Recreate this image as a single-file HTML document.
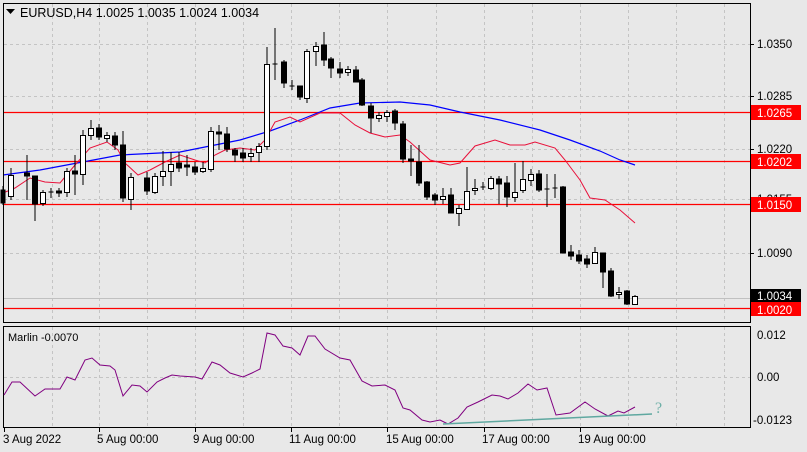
<!DOCTYPE html>
<html><head><meta charset="utf-8"><style>
html,body{margin:0;padding:0;background:#e8e8e8;}
svg{display:block;font-family:"Liberation Sans",sans-serif;}
</style></head><body>
<svg width="807" height="452" viewBox="0 0 807 452" xmlns="http://www.w3.org/2000/svg">
<rect x="0" y="0" width="807" height="452" fill="#e8e8e8"/>
<g stroke="#c4c4c4" stroke-dasharray="3,3" stroke-width="1">
<line x1="52.5" y1="4" x2="52.5" y2="322"/><line x1="99.5" y1="4" x2="99.5" y2="322"/><line x1="147.5" y1="4" x2="147.5" y2="322"/><line x1="195.5" y1="4" x2="195.5" y2="322"/><line x1="243.5" y1="4" x2="243.5" y2="322"/><line x1="291.5" y1="4" x2="291.5" y2="322"/><line x1="339.5" y1="4" x2="339.5" y2="322"/><line x1="387.5" y1="4" x2="387.5" y2="322"/><line x1="436.5" y1="4" x2="436.5" y2="322"/><line x1="484.5" y1="4" x2="484.5" y2="322"/><line x1="532.5" y1="4" x2="532.5" y2="322"/><line x1="580.5" y1="4" x2="580.5" y2="322"/><line x1="628.5" y1="4" x2="628.5" y2="322"/><line x1="676.5" y1="4" x2="676.5" y2="322"/><line x1="724.5" y1="4" x2="724.5" y2="322"/>
<line x1="4" y1="44.5" x2="750" y2="44.5"/><line x1="4" y1="96.5" x2="750" y2="96.5"/><line x1="4" y1="149.5" x2="750" y2="149.5"/><line x1="4" y1="199.5" x2="750" y2="199.5"/><line x1="4" y1="253.5" x2="750" y2="253.5"/>
<line x1="52.5" y1="327" x2="52.5" y2="427"/><line x1="99.5" y1="327" x2="99.5" y2="427"/><line x1="147.5" y1="327" x2="147.5" y2="427"/><line x1="195.5" y1="327" x2="195.5" y2="427"/><line x1="243.5" y1="327" x2="243.5" y2="427"/><line x1="291.5" y1="327" x2="291.5" y2="427"/><line x1="339.5" y1="327" x2="339.5" y2="427"/><line x1="387.5" y1="327" x2="387.5" y2="427"/><line x1="436.5" y1="327" x2="436.5" y2="427"/><line x1="484.5" y1="327" x2="484.5" y2="427"/><line x1="532.5" y1="327" x2="532.5" y2="427"/><line x1="580.5" y1="327" x2="580.5" y2="427"/><line x1="628.5" y1="327" x2="628.5" y2="427"/><line x1="676.5" y1="327" x2="676.5" y2="427"/><line x1="724.5" y1="327" x2="724.5" y2="427"/>
<line x1="4" y1="377.5" x2="750" y2="377.5"/>
</g>
<line x1="4" y1="298.5" x2="750" y2="298.5" stroke="#c0c0c0"/>
<g stroke="#ff0000" stroke-width="1.3">
<line x1="4" y1="112.5" x2="750" y2="112.5"/><line x1="4" y1="161.5" x2="750" y2="161.5"/><line x1="4" y1="204.5" x2="750" y2="204.5"/><line x1="4" y1="308.5" x2="750" y2="308.5"/>
</g>
<polyline fill="none" stroke="#0000ff" stroke-width="1.2" points="3,175 40,170 120,155 180,152 240,140 270,131 300,120 330,108 360,103 400,102 430,105 460,112 500,120 540,130 570,140 600,151 620,160 635,165"/>
<polyline fill="none" stroke="#e8103a" stroke-width="1" points="3,193 15,188 30,178 45,182 60,183 75,165 90,148 107,142 118,150 125,163 138,175 150,170 165,162 180,155 195,160 205,163 215,155 225,150 240,148 255,150 265,140 275,122 290,117 300,122 320,113 340,113 355,125 370,133 385,137 400,135 410,142 430,160 450,165 460,163 475,146 495,140 510,145 525,145 535,142 555,148 565,160 580,180 590,198 605,200 620,210 635,223"/>
<g stroke="#000" stroke-width="1">
<line x1="3" y1="186" x2="3" y2="205"/><rect x="1" y="190" width="4" height="13" fill="#000"/>
<line x1="11" y1="168" x2="11" y2="200"/><rect x="8.5" y="175.5" width="5" height="21" fill="#fff"/>
<line x1="27" y1="155" x2="27" y2="200"/><rect x="24.5" y="173" width="5" height="3" fill="#000"/>
<line x1="35" y1="176" x2="35" y2="221"/><rect x="32.5" y="176" width="5" height="28" fill="#000"/>
<line x1="43" y1="190" x2="43" y2="206"/><rect x="40.5" y="192.5" width="5" height="11" fill="#fff"/>
<line x1="51" y1="188" x2="51" y2="198"/><line x1="48.5" y1="192" x2="53.5" y2="192"/>
<line x1="59" y1="188" x2="59" y2="197"/><rect x="56.5" y="191" width="5" height="2" fill="#000"/>
<line x1="67" y1="168" x2="67" y2="197"/><rect x="64.5" y="171.5" width="5" height="21" fill="#fff"/>
<line x1="75" y1="155" x2="75" y2="195"/><rect x="72.5" y="171" width="5" height="3" fill="#000"/>
<line x1="83" y1="130" x2="83" y2="185"/><rect x="80.5" y="135.5" width="5" height="39" fill="#fff"/>
<line x1="91" y1="120" x2="91" y2="140"/><rect x="88.5" y="128.5" width="5" height="7" fill="#fff"/>
<line x1="99" y1="124" x2="99" y2="140"/><rect x="96.5" y="128" width="5" height="9" fill="#000"/>
<line x1="107" y1="132" x2="107" y2="142"/><rect x="104.5" y="135.5" width="5" height="3" fill="#fff"/>
<line x1="115" y1="132" x2="115" y2="150"/><rect x="112.5" y="136" width="5" height="9" fill="#000"/>
<line x1="123" y1="131" x2="123" y2="202"/><rect x="120.5" y="145" width="5" height="53" fill="#000"/>
<line x1="131" y1="173" x2="131" y2="210"/><rect x="128.5" y="177.5" width="5" height="22" fill="#fff"/>
<line x1="147" y1="172" x2="147" y2="195"/><rect x="144.5" y="178" width="5" height="13" fill="#000"/>
<line x1="155" y1="173" x2="155" y2="194"/><rect x="152.5" y="176.5" width="5" height="16" fill="#fff"/>
<line x1="163" y1="151" x2="163" y2="186"/><rect x="160.5" y="171.5" width="5" height="5" fill="#fff"/>
<line x1="171" y1="152" x2="171" y2="186"/><rect x="168.5" y="164.5" width="5" height="7" fill="#fff"/>
<line x1="179" y1="152" x2="179" y2="172"/><rect x="176.5" y="163" width="5" height="5" fill="#000"/>
<line x1="187" y1="155" x2="187" y2="176"/><rect x="184.5" y="165" width="5" height="2" fill="#000"/>
<line x1="195" y1="162" x2="195" y2="175"/><rect x="192.5" y="167" width="5" height="5" fill="#000"/>
<line x1="203" y1="162" x2="203" y2="173"/><rect x="200.5" y="168.5" width="5" height="3" fill="#fff"/>
<line x1="211" y1="127" x2="211" y2="172"/><rect x="208.5" y="131.5" width="5" height="38" fill="#fff"/>
<line x1="219" y1="125" x2="219" y2="150"/><rect x="216.5" y="132" width="5" height="2" fill="#000"/>
<line x1="227" y1="127" x2="227" y2="152"/><rect x="224.5" y="134" width="5" height="15" fill="#000"/>
<line x1="235" y1="148" x2="235" y2="162"/><rect x="232.5" y="150" width="5" height="5" fill="#000"/>
<line x1="243" y1="148" x2="243" y2="162"/><rect x="240.5" y="153" width="5" height="5" fill="#000"/>
<line x1="251" y1="148" x2="251" y2="162"/><rect x="248.5" y="153.5" width="5" height="3" fill="#fff"/>
<line x1="259" y1="143" x2="259" y2="162"/><rect x="256.5" y="146.5" width="5" height="6" fill="#fff"/>
<line x1="267" y1="47" x2="267" y2="150"/><rect x="264.5" y="64.5" width="5" height="82" fill="#fff"/>
<line x1="275" y1="28" x2="275" y2="80"/><line x1="272.5" y1="64" x2="277.5" y2="64"/>
<line x1="284" y1="60" x2="284" y2="88"/><rect x="281.5" y="62" width="5" height="21" fill="#000"/>
<line x1="292" y1="80" x2="292" y2="90"/><line x1="289.5" y1="86" x2="294.5" y2="86"/>
<line x1="300" y1="86" x2="300" y2="100"/><rect x="297.5" y="86" width="5" height="11" fill="#000"/>
<line x1="307" y1="49" x2="307" y2="103"/><rect x="304.5" y="51.5" width="5" height="47" fill="#fff"/>
<line x1="316" y1="42" x2="316" y2="66"/><rect x="313.5" y="46.5" width="5" height="5" fill="#fff"/>
<line x1="324" y1="32" x2="324" y2="66"/><rect x="321.5" y="45" width="5" height="15" fill="#000"/>
<line x1="331" y1="57" x2="331" y2="78"/><rect x="328.5" y="59" width="5" height="9" fill="#000"/>
<line x1="340" y1="62" x2="340" y2="78"/><rect x="337.5" y="69" width="5" height="4" fill="#000"/>
<line x1="348" y1="66" x2="348" y2="76"/><rect x="345.5" y="69.5" width="5" height="3" fill="#fff"/>
<line x1="356" y1="66" x2="356" y2="82"/><rect x="353.5" y="70" width="5" height="12" fill="#000"/>
<line x1="362" y1="78" x2="362" y2="106"/><rect x="359.5" y="80" width="5" height="25" fill="#000"/>
<line x1="371" y1="103" x2="371" y2="133"/><rect x="368.5" y="106" width="5" height="12" fill="#000"/>
<line x1="379" y1="112" x2="379" y2="122"/><rect x="376.5" y="115.5" width="5" height="3" fill="#fff"/>
<line x1="387" y1="110" x2="387" y2="122"/><rect x="384.5" y="112.5" width="5" height="4" fill="#fff"/>
<line x1="395" y1="109" x2="395" y2="130"/><rect x="392.5" y="111" width="5" height="12" fill="#000"/>
<line x1="403" y1="121" x2="403" y2="163"/><rect x="400.5" y="124" width="5" height="35" fill="#000"/>
<line x1="411" y1="145" x2="411" y2="176"/><rect x="408.5" y="159" width="5" height="2" fill="#000"/>
<line x1="419" y1="145" x2="419" y2="186"/><rect x="416.5" y="162" width="5" height="21" fill="#000"/>
<line x1="427" y1="181" x2="427" y2="200"/><rect x="424.5" y="182" width="5" height="15" fill="#000"/>
<line x1="435" y1="193" x2="435" y2="205"/><rect x="432.5" y="195" width="5" height="5" fill="#000"/>
<line x1="443" y1="188" x2="443" y2="204"/><rect x="440.5" y="196.5" width="5" height="3" fill="#fff"/>
<line x1="451" y1="188" x2="451" y2="213"/><rect x="448.5" y="195" width="5" height="18" fill="#000"/>
<line x1="459" y1="205" x2="459" y2="226"/><rect x="456.5" y="208.5" width="5" height="5" fill="#fff"/>
<line x1="467" y1="167" x2="467" y2="209"/><rect x="464.5" y="191.5" width="5" height="18" fill="#fff"/>
<line x1="475" y1="179" x2="475" y2="195"/><rect x="472.5" y="188.5" width="5" height="2" fill="#fff"/>
<line x1="483" y1="182" x2="483" y2="190"/><line x1="480.5" y1="187" x2="485.5" y2="187"/>
<line x1="491" y1="176" x2="491" y2="190"/><rect x="488.5" y="178.5" width="5" height="10" fill="#fff"/>
<line x1="499" y1="176" x2="499" y2="204"/><rect x="496.5" y="179" width="5" height="5" fill="#000"/>
<line x1="507" y1="176" x2="507" y2="207"/><rect x="504.5" y="183" width="5" height="14" fill="#000"/>
<line x1="515" y1="163" x2="515" y2="202"/><rect x="512.5" y="192.5" width="5" height="5" fill="#fff"/>
<line x1="523" y1="161" x2="523" y2="193"/><rect x="520.5" y="179.5" width="5" height="11" fill="#fff"/>
<line x1="531" y1="169" x2="531" y2="186"/><rect x="528.5" y="174.5" width="5" height="6" fill="#fff"/>
<line x1="539" y1="170" x2="539" y2="192"/><rect x="536.5" y="174" width="5" height="16" fill="#000"/>
<line x1="547" y1="174" x2="547" y2="207"/><line x1="544.5" y1="189" x2="549.5" y2="189"/>
<line x1="555" y1="174" x2="555" y2="198"/><line x1="552.5" y1="188" x2="557.5" y2="188"/>
<line x1="563" y1="186" x2="563" y2="253"/><rect x="560.5" y="187" width="5" height="66" fill="#000"/>
<line x1="571" y1="245" x2="571" y2="260"/><rect x="568.5" y="252" width="5" height="4" fill="#000"/>
<line x1="579" y1="250" x2="579" y2="264"/><rect x="576.5" y="255" width="5" height="6" fill="#000"/>
<line x1="587" y1="255" x2="587" y2="268"/><rect x="584.5" y="259" width="5" height="5" fill="#000"/>
<line x1="595" y1="247" x2="595" y2="264"/><rect x="592.5" y="252.5" width="5" height="11" fill="#fff"/>
<line x1="603" y1="253" x2="603" y2="288"/><rect x="600.5" y="253" width="5" height="19" fill="#000"/>
<line x1="611" y1="268" x2="611" y2="297"/><rect x="608.5" y="271" width="5" height="25" fill="#000"/>
<line x1="619" y1="287" x2="619" y2="299"/><rect x="616.5" y="292.5" width="5" height="2" fill="#fff"/>
<line x1="627" y1="290" x2="627" y2="305"/><rect x="624.5" y="291" width="5" height="13" fill="#000"/>
<line x1="635" y1="295" x2="635" y2="304"/><rect x="632.5" y="296.5" width="5" height="8" fill="#fff"/>
</g>
<rect x="3.5" y="3.5" width="747" height="319" fill="none" stroke="#000"/>
<rect x="3.5" y="326.5" width="747" height="101" fill="none" stroke="#000"/>
<polygon points="6,9 15,9 10.5,14" fill="#000"/>
<text x="20" y="17" font-size="12.5" fill="#000">EURUSD,H4  1.0025 1.0035 1.0024 1.0034</text>
<g font-size="11.5" fill="#000">
<text x="757" y="48">1.0350</text><text x="757" y="100">1.0285</text><text x="757" y="153">1.0220</text><text x="757" y="203">1.0155</text><text x="757" y="257">1.0090</text>
<text x="757" y="339">0.012</text><text x="757" y="381">0.00</text><text x="753" y="424">-0.0123</text>
</g>
<g stroke="#000"><line x1="750" y1="44.5" x2="754" y2="44.5"/><line x1="750" y1="96.5" x2="754" y2="96.5"/><line x1="750" y1="149.5" x2="754" y2="149.5"/><line x1="750" y1="253.5" x2="754" y2="253.5"/></g>
<rect x="751" y="105" width="50" height="15" fill="#ff0000"/><text x="757" y="117" font-size="11.5" fill="#fff">1.0265</text>
<rect x="751" y="154" width="50" height="15" fill="#ff0000"/><text x="757" y="166" font-size="11.5" fill="#fff">1.0202</text>
<rect x="751" y="197" width="50" height="15" fill="#ff0000"/><text x="757" y="209" font-size="11.5" fill="#fff">1.0150</text>
<rect x="751" y="289" width="50" height="14" fill="#000"/><text x="757" y="300" font-size="11.5" fill="#fff">1.0034</text>
<rect x="751" y="302" width="50" height="14" fill="#ff0000"/><text x="757" y="314" font-size="11.5" fill="#fff">1.0020</text>
<text x="8" y="341" font-size="11" fill="#000">Marlin -0.0070</text>
<polyline fill="none" stroke="#800080" stroke-width="1" points="4,395 12,382 20,382 35,396 45,389 60,389 67,377 75,380 85,360 92,358 100,365 110,366 115,370 123,396 132,385 140,386 147,392 157,382 165,378 172,375 180,376 195,377 202,379 212,362 220,365 230,373 243,377 252,373 260,369 267,333 275,335 283,346 292,348 300,355 308,336 315,336 325,349 340,358 350,360 362,381 372,386 385,385 395,390 403,408 410,410 422,420 430,422 440,420 448,424 458,418 467,407 478,402 492,395 500,396 508,399 518,393 528,384 537,390 547,388 556,415 570,413 585,402 595,409 608,416 618,411 624,413 635,407"/>
<line x1="443" y1="424" x2="652" y2="414" stroke="#5fa8a0" stroke-width="1.5"/>
<text x="655" y="413" font-size="16" fill="#6fb0a8" font-family="Liberation Serif,serif">?</text>
<g stroke="#000"><line x1="4.5" y1="428" x2="4.5" y2="432"/><line x1="99.5" y1="428" x2="99.5" y2="432"/><line x1="195.5" y1="428" x2="195.5" y2="432"/><line x1="291.5" y1="428" x2="291.5" y2="432"/><line x1="387.5" y1="428" x2="387.5" y2="432"/><line x1="484.5" y1="428" x2="484.5" y2="432"/><line x1="580.5" y1="428" x2="580.5" y2="432"/></g>
<g font-size="11.5" fill="#000">
<text x="3" y="443">3 Aug 2022</text><text x="97" y="443">5 Aug 00:00</text><text x="193" y="443">9 Aug 00:00</text><text x="289" y="443">11 Aug 00:00</text><text x="386" y="443">15 Aug 00:00</text><text x="482" y="443">17 Aug 00:00</text><text x="578" y="443">19 Aug 00:00</text>
</g>
</svg>
</body></html>
